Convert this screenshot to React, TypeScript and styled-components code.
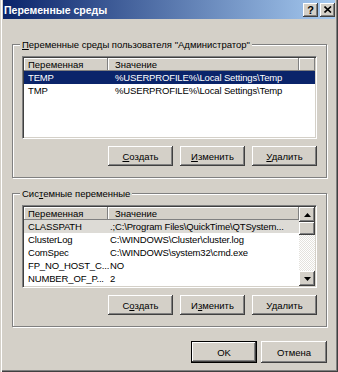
import React from 'react';
import styled, { createGlobalStyle } from 'styled-components';

interface IVariable {
  name: string;
  value: string;
}

const userVars: IVariable[] = [
  { name: 'TEMP', value: '%USERPROFILE%\\Local Settings\\Temp' },
  { name: 'TMP', value: '%USERPROFILE%\\Local Settings\\Temp' },
];

const systemVars: IVariable[] = [
  { name: 'CLASSPATH', value: '.;C:\\Program Files\\QuickTime\\QTSystem...' },
  { name: 'ClusterLog', value: 'C:\\WINDOWS\\Cluster\\cluster.log' },
  { name: 'ComSpec', value: 'C:\\WINDOWS\\system32\\cmd.exe' },
  { name: 'FP_NO_HOST_C...', value: 'NO' },
  { name: 'NUMBER_OF_P...', value: '2' },
  { name: 'OS', value: 'Windows_NT' },
];

const GlobalStyle = createGlobalStyle`
  html, body {
    margin: 0;
    padding: 0;
    background: #d4d0c8;
  }

  body {
    font-family: "Liberation Sans", Tahoma, Arial, sans-serif;
    font-size: 9.5px;
    color: #000;
  }
`;

const Window = styled.div`
  box-sizing: border-box;
  width: 338px;
  height: 372px;
  padding: 0 3px 3px;
  display: flex;
  flex-direction: column;
  background: #d4d0c8;
  box-shadow:
    inset 1px 0 #d4d0c8,
    inset 2px 0 #fff,
    inset -1px -1px #404040,
    inset -2px -2px #808080;
`;

const TitleBar = styled.div`
  height: 19px;
  display: flex;
  align-items: center;
  padding: 0 0 0 1px;
  background: linear-gradient(to right, #0a246a, #a6caf0);
`;

const Title = styled.div`
  flex: 1;
  color: #fff;
  font-weight: bold;
  font-size: 10.5px;
  white-space: nowrap;
`;

const CaptionButton = styled.div<{ $gap?: number }>`
  width: 15px;
  height: 14px;
  margin-left: ${(p) => p.$gap ?? 0}px;
  display: flex;
  align-items: center;
  justify-content: center;
  background: #d4d0c8;
  box-shadow:
    inset -1px -1px #404040,
    inset 1px 1px #fff,
    inset -2px -2px #808080;
  font-weight: bold;
  font-size: 11px;
  line-height: 14px;
`;

const Body = styled.div`
  flex: 1;
  display: flex;
  flex-direction: column;
  padding: 19px 8px 0 9px;
`;

const Group = styled.fieldset<{ $top?: number }>`
  margin: ${(p) => p.$top ?? 0}px 0 0;
  padding: 5px 9px 11px;
  border: 1px solid #808080;
  box-shadow: 1px 1px 0 #fff, inset 1px 1px 0 #fff;
  min-width: 0;
`;

const Legend = styled.legend`
  margin-left: -2px;
  padding: 0 2px;
  line-height: 13px;
  background: #d4d0c8;
`;

const Key = styled.span`
  text-decoration: underline;
`;

const ListBox = styled.div`
  box-sizing: border-box;
  height: 83px;
  padding: 1px;
  display: flex;
  background: #fff;
  border: 1px solid;
  border-color: #808080 #fff #fff #808080;
  box-shadow: inset 1px 1px #404040, inset -1px -1px #d4d0c8;
  overflow: hidden;
`;

const Table = styled.div`
  flex: 1;
  min-width: 0;
  overflow: hidden;
`;

const HeaderRow = styled.div`
  display: grid;
  grid-template-columns: 84px 191px 1fr;
  height: 13px;
`;

const HeaderCell = styled.div<{ $indent?: number }>`
  padding: 0 0 0 ${(p) => p.$indent ?? 4}px;
  line-height: 13px;
  background: #d4d0c8;
  box-shadow:
    inset -1px -1px #808080,
    inset 1px 1px #fff;
  white-space: nowrap;
  overflow: hidden;
`;

const Row = styled.div<{ $state?: 'active' | 'inactive' }>`
  display: grid;
  grid-template-columns: 84px 191px;
  height: 13px;
  line-height: 13px;
  white-space: nowrap;
  letter-spacing: -0.15px;
  background: ${(p) =>
    p.$state === 'active' ? '#0a246a' : p.$state === 'inactive' ? '#dddbd6' : 'transparent'};
  color: ${(p) => (p.$state === 'active' ? '#fff' : '#000')};
`;

const Cell = styled.div<{ $indent: number }>`
  padding-left: ${(p) => p.$indent}px;
`;

const ScrollBar = styled.div`
  width: 16px;
  display: flex;
  flex-direction: column;
  background: repeating-conic-gradient(#fff 0 25%, #e4e2dd 0 50%) 0 0 / 2px 2px;
`;

const ScrollButton = styled.div<{ $height: number }>`
  height: ${(p) => p.$height}px;
  display: flex;
  align-items: center;
  justify-content: center;
  background: #d4d0c8;
  box-shadow:
    inset -1px -1px #404040,
    inset 1px 1px #fff,
    inset -2px -2px #808080;
`;

const Track = styled.div`
  flex: 1;
`;

const ButtonRow = styled.div<{ $gap: number; $top: number }>`
  display: flex;
  justify-content: flex-end;
  gap: ${(p) => p.$gap}px;
  margin-top: ${(p) => p.$top}px;
`;

const Button = styled.button<{ $default?: boolean; $width?: number; $height?: number }>`
  box-sizing: border-box;
  width: ${(p) => p.$width ?? 65}px;
  height: ${(p) => p.$height ?? 20}px;
  padding: 0;
  font: inherit;
  color: #000;
  background: #d4d0c8;
  border: ${(p) => (p.$default ? '1px solid #000' : 'none')};
  box-shadow:
    inset -1px -1px #404040,
    inset 1px 1px #fff,
    inset -2px -2px #808080;
`;

const Arrow: React.FC<{ up?: boolean }> = ({ up }) => (
  <svg width="7" height="4" viewBox="0 0 7 4">
    <polygon points={up ? '3.5,0 7,4 0,4' : '0,0 7,0 3.5,4'} fill="#000" />
  </svg>
);

const CloseGlyph = () => (
  <svg width="8" height="7" viewBox="0 0 8 7">
    <path d="M0.5 0.5 L7 6.5 M7 0.5 L0.5 6.5" stroke="#000" strokeWidth="1.6" />
  </svg>
);

interface IVarListProps {
  vars: IVariable[];
  valueIndent: number;
  scroll?: boolean;
  selected: 'active' | 'inactive';
}

const VarList: React.FC<IVarListProps> = ({ vars, valueIndent, scroll, selected }) => (
  <ListBox>
    <Table>
      <HeaderRow>
        <HeaderCell>Переменная</HeaderCell>
        <HeaderCell $indent={7}>Значение</HeaderCell>
        {!scroll && <HeaderCell />}
      </HeaderRow>
      {vars.map((v, i) => (
        <Row key={v.name} $state={i === 0 ? selected : undefined}>
          <Cell $indent={4}>{v.name}</Cell>
          <Cell $indent={valueIndent}>{v.value}</Cell>
        </Row>
      ))}
    </Table>
    {scroll && (
      <ScrollBar>
        <ScrollButton $height={15}>
          <Arrow up />
        </ScrollButton>
        <ScrollButton $height={13} />
        <Track />
        <ScrollButton $height={15}>
          <Arrow />
        </ScrollButton>
      </ScrollBar>
    )}
  </ListBox>
);

const Actions: React.FC<{ keys: [string, string, string][] }> = ({ keys }) => (
  <ButtonRow $gap={7} $top={7}>
    {keys.map(([before, key, after]) => (
      <Button key={before + key + after}>
        {before}
        <Key>{key}</Key>
        {after}
      </Button>
    ))}
  </ButtonRow>
);

const App: React.FC = () => (
  <>
    <GlobalStyle />
    <Window>
      <TitleBar>
        <Title>Переменные среды</Title>
        <CaptionButton>?</CaptionButton>
        <CaptionButton $gap={2}>
          <CloseGlyph />
        </CaptionButton>
      </TitleBar>

      <Body>
        <Group>
          <Legend>
            <Key>П</Key>еременные среды пользователя "Администратор"
          </Legend>
          <VarList vars={userVars} valueIndent={7} selected="active" />
          <Actions
            keys={[
              ['', 'С', 'оздать'],
              ['', 'И', 'зменить'],
              ['', 'У', 'далить'],
            ]}
          />
        </Group>

        <Group $top={9}>
          <Legend>
            Сис<Key>т</Key>емные переменные
          </Legend>
          <VarList vars={systemVars} valueIndent={2} scroll selected="inactive" />
          <Actions
            keys={[
              ['С', 'о', 'здать'],
              ['И', 'з', 'менить'],
              ['У', 'д', 'алить'],
            ]}
          />
        </Group>

        <ButtonRow $gap={4} $top={14}>
          <Button $default $width={66} $height={22}>
            OK
          </Button>
          <Button $width={66} $height={22}>
            Отмена
          </Button>
        </ButtonRow>
      </Body>
    </Window>
  </>
);

export default App;
